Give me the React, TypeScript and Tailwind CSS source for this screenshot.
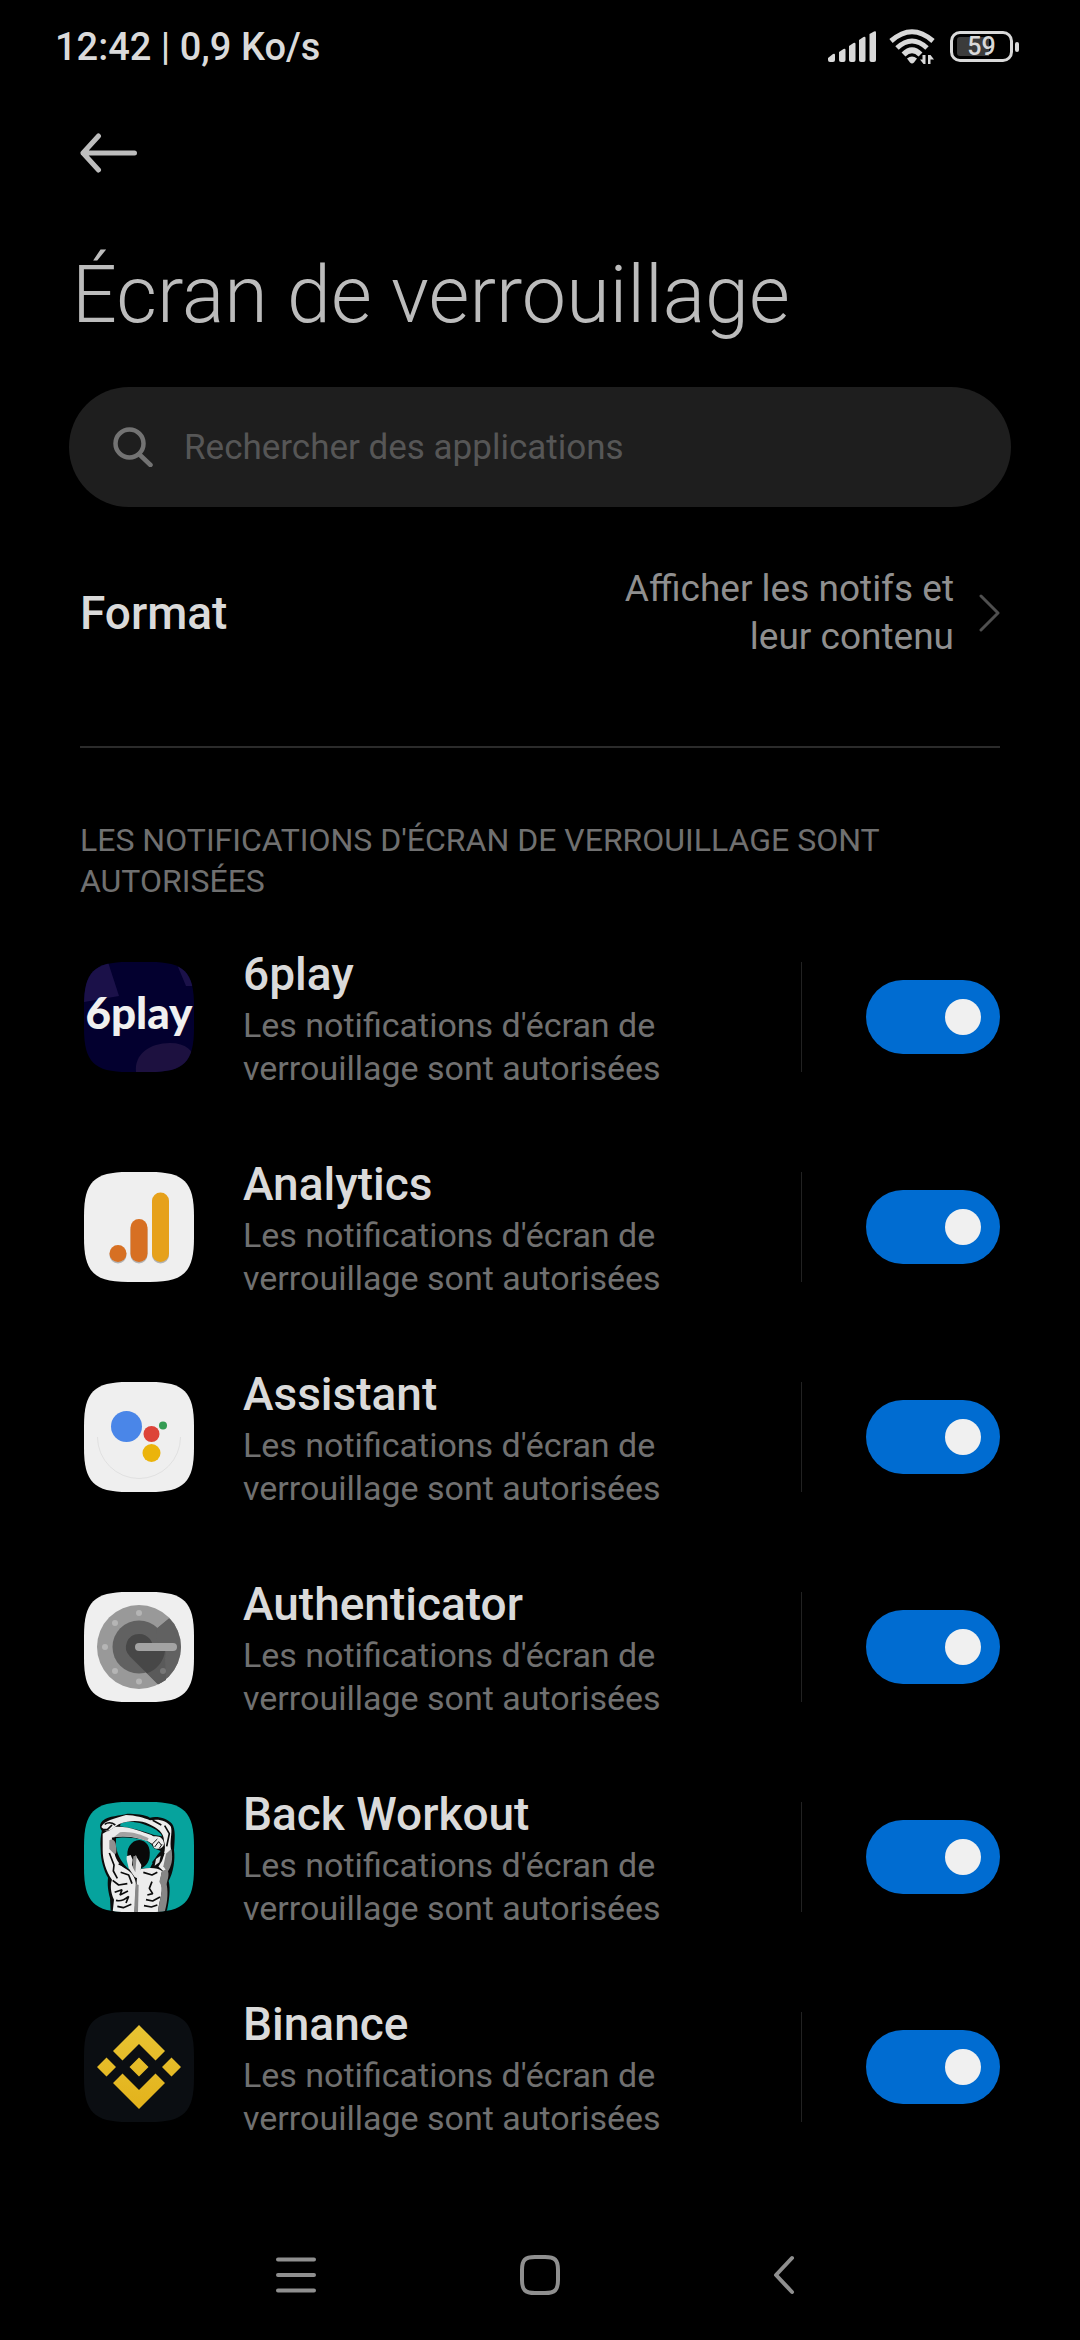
import React, { useState } from "react";

function Tile({ id, fill, children }: { id: string; fill: string; children: React.ReactNode }) {
  return (
    <svg viewBox="0 0 110 110" className="size-[110px] shrink-0" aria-hidden="true">
      <defs>
        <clipPath id={id}>
          <path d="M0 44C0 10 10 0 44 0H66C100 0 110 10 110 44V66C110 100 100 110 66 110H44C10 110 0 100 0 66Z" />
        </clipPath>
      </defs>
      <g clipPath={`url(#${id})`}>
        <rect width="110" height="110" fill={fill} />
        {children}
      </g>
    </svg>
  );
}

const SixPlay = () => (
  <Tile id="t-6play" fill="#03002f">
    <path d="M0 0H24L35 34L0 40Z" fill="#1b1149" />
    <path d="M92 0H110V24H102Z" fill="#1b1149" />
    <path d="M52 110C50 92 66 81 86 81C102 81 110 89 110 98V110Z" fill="#1d1140" />
    <text
      x="55"
      y="67"
      textAnchor="middle"
      fontFamily="Lato, 'Liberation Sans', sans-serif"
      fontWeight="900"
      fontSize="44"
      fill="#f0f0f0"
    >
      6play
    </text>
  </Tile>
);

const Analytics = () => (
  <Tile id="t-analytics" fill="#efefef">
    <g fill="#8a8a8a" opacity="0.6">
      <circle cx="34" cy="83" r="8.5" />
      <rect x="46.500" y="49" width="17" height="42.500" rx="8.500" />
      <rect x="68" y="22" width="17" height="69.500" rx="8.500" />
    </g>
    <circle cx="34" cy="81.5" r="8.5" fill="#d77023" />
    <rect x="46.500" y="47" width="17" height="43" rx="8.500" fill="#d77023" />
    <rect x="68" y="20.500" width="17" height="69.500" rx="8.500" fill="#e6a11b" />
  </Tile>
);

const Assistant = () => (
  <Tile id="t-assistant" fill="#efefef">
    <path d="M13.5 55A41.500 41.500 0 0 0 96.500 55" fill="none" stroke="#e0e0e0" strokeWidth="1" />
    <circle cx="42.500" cy="44.500" r="15.500" fill="#4a86e8" />
    <circle cx="67.500" cy="52" r="8" fill="#dd4439" />
    <circle cx="67.500" cy="71" r="9" fill="#ebb40c" />
    <circle cx="79" cy="43.500" r="4" fill="#349c53" />
  </Tile>
);

const Authenticator = () => (
  <Tile id="t-auth" fill="#efefef">
    <defs>
      <clipPath id="dial">
        <circle cx="55" cy="55" r="42" />
      </clipPath>
    </defs>
    <circle cx="55" cy="55" r="42" fill="#999999" />
    <g clipPath="url(#dial)">
      <path d="M74 35.500L85 26.500L110 20V100L74 92L60 78Z" fill="#616161" />
    </g>
    <circle cx="55" cy="55" r="26.500" fill="#616161" />
    <path d="M73 36.500L85 26.500L92 44L96 55L80 66L72 45Z" fill="#616161" />
    <path d="M45.500 64L74 92.500L82 88L81 66A26.500 26.500 0 0 0 81.500 55H55Z" fill="#5a5a5a" />
    <path d="M55 42A13 13 0 0 0 45.800 64.200L63 81.200A27 27 0 0 0 81 59H68A13 13 0 0 0 55 42Z" fill="#474747" />
    <g fill="#b5b5b5">
      <circle cx="55" cy="21" r="3" />
      <circle cx="31" cy="31" r="3" />
      <circle cx="21" cy="55" r="3" />
      <circle cx="31" cy="79" r="3" />
      <circle cx="55" cy="89.500" r="3" />
    </g>
    <circle cx="79" cy="79" r="3" fill="#777777" />
    <rect x="51" y="51" width="42" height="8" rx="4" fill="#a3a3a3" />
  </Tile>
);

const BackWorkout = () => (
  <Tile id="t-back" fill="#06a39d">
    <svg viewBox="42 51 330 330" width="110" height="110">
      <path
        d="M122 381L120 340C114 316 112 300 114 278C102 258 92 225 92 195C90 170 92 150 96 136C88 130 88 116 98 107C116 92 150 92 172 86C195 86 225 88 240 98C262 92 292 100 306 116C318 132 314 165 312 195C316 225 310 262 296 288C302 312 298 345 290 381Z"
        fill="#0b0b0b"
      />
      <path d="M138 160C160 154 200 160 226 164L244 178L252 190L272 198L262 210C254 224 246 236 240 250L176 252C160 240 142 214 138 184Z" fill="#06a39d" />
      <path d="M152 116C184 102 222 116 258 134C268 142 276 148 276 154L252 150C220 140 186 128 150 124Z" fill="#06a39d" />
      <path d="M134 126C172 122 214 140 244 150L256 158L246 176L232 168C200 156 160 150 124 158L112 140Z" fill="#ececec" />
      <path d="M150 142C180 138 214 148 236 160L232 168C200 156 164 150 132 156Z" fill="#a2a2a2" />
      <path
        d="M94 126C100 108 134 100 168 90C196 91 222 98 240 106C266 100 292 108 302 124C308 140 300 160 302 186C308 216 298 250 288 268C280 258 272 250 264 244C280 218 290 194 282 168C282 142 262 130 238 118C212 104 178 106 150 116C136 122 120 142 104 136Z"
        fill="#ececec"
      />
      <path
        d="M98 146L112 138L124 150C128 160 124 186 134 206C138 226 152 242 168 252C188 262 198 284 198 300L194 381H128L132 344C122 322 120 300 126 284C108 260 98 224 98 196Z"
        fill="#ededed"
      />
      <path
        d="M200 300C200 280 202 258 214 252C240 246 264 248 276 258L270 288C284 314 268 340 264 381H202Z"
        fill="#ededed"
      />
      <path d="M276 258L292 252C300 270 292 284 290 298C296 330 290 360 284 381H264C268 340 284 314 268 290Z" fill="#868686" />
      <path d="M174 224C166 190 184 166 208 165C230 167 242 186 239 212C238 232 226 246 212 250L184 254Z" fill="#090909" />
      <path d="M170 214L182 210L188 224L186 240L194 254L196 210L206 226L214 240L212 256L206 282L194 276L176 250C174 236 168 226 170 214Z" fill="#e6e6e6" />
      <path d="M190 214L200 212L196 262L188 246Z" fill="#8b8b8b" />
      <path d="M197 296L206 300L204 381H192Z" fill="#888888" />
      <path d="M118 166C126 160 138 166 138 184C140 200 140 210 132 206L118 192Z" fill="#8f8f8f" />
      <path d="M240 158C262 148 280 156 282 176C280 190 264 196 252 188L246 172Z" fill="#ececec" />
      <path d="M248 176L262 162M254 186L266 170L274 180M268 190L276 178" fill="none" stroke="#0b0b0b" strokeWidth="3" />
      <path d="M288 206L304 192C310 224 304 244 292 262L280 244Z" fill="#858585" />
      <path d="M246 232L266 206L284 204L276 228L262 250Z" fill="#0b0b0b" />
      <path d="M258 222L272 212L268 232L254 242Z" fill="#dddddd" />
      <path
        d="M94 134L112 134L126 120M104 118C116 110 128 114 136 120M118 204L132 240L130 258L142 280M146 236L166 246M152 262L176 270L186 296M128 286L146 300L172 296M134 322L156 314L150 330L174 318M138 346C152 350 164 344 176 334L168 354M142 364L160 368L184 358M220 262L246 270L262 262M246 290L238 310L248 326L232 330M270 336L248 348L228 344M262 360L244 366L222 362M284 122L298 146L290 184M248 106L274 120"
        fill="none"
        stroke="#0b0b0b"
        strokeWidth="5"
        strokeLinejoin="bevel"
      />
    </svg>
  </Tile>
);

const Binance = () => (
  <Tile id="t-binance" fill="#0b0e12">
    <defs>
      <linearGradient id="gold" x1="0" y1="0" x2="0" y2="1">
        <stop offset="0" stopColor="#e8c433" />
        <stop offset="1" stopColor="#e3b21b" />
      </linearGradient>
    </defs>
    <path
      fill="url(#gold)"
      d="M55 13L81 39L71.500 48.500L55 32L38.500 48.500L29 39ZM22.500 45.500L32 55L22.500 64.500L13 55ZM55 45.500L64.500 55L55 64.500L45.500 55ZM87.500 45.500L97 55L87.500 64.500L78 55ZM38.500 61.500L55 78L71.500 61.500L81 71L55 97L29 71Z"
    />
  </Tile>
);

const apps = [
  { name: "6play", Icon: SixPlay },
  { name: "Analytics", Icon: Analytics },
  { name: "Assistant", Icon: Assistant },
  { name: "Authenticator", Icon: Authenticator },
  { name: "Back Workout", Icon: BackWorkout },
  { name: "Binance", Icon: Binance },
];

function AppRow({ name, Icon }: { name: string; Icon: React.ComponentType }) {
  const [on, setOn] = useState(true);
  const id = `switch-${name.replace(" ", "-")}`;
  return (
    <li className="flex h-[210px] items-center">
      <Icon />
      <label htmlFor={id} className="ml-[49px] min-w-0 flex-1">
        <span className="block text-[46px] leading-[60px] font-medium text-[#dadada]">{name}</span>
        <span className="block max-w-[460px] text-[34px] leading-[43px] text-[#707070]">
          Les notifications d'écran de verrouillage sont autorisées
        </span>
      </label>
      <span className="h-[110px] w-px bg-[#222222]" />
      <input
        id={id}
        type="checkbox"
        role="switch"
        checked={on}
        onChange={(e) => setOn(e.target.checked)}
        className="ml-16 flex h-[74px] w-[134px] shrink-0 cursor-pointer appearance-none items-center rounded-full bg-[#333333] px-[19px] before:size-9 before:rounded-full before:bg-[#f0f0f0] checked:justify-end checked:bg-[#006cd1]"
      />
    </li>
  );
}

function StatusIcons() {
  return (
    <div className="flex items-center gap-[13px] text-[#d9d9d9]">
      <svg viewBox="0 0 48 31" className="h-[31px] w-12" fill="currentColor" aria-label="Réseau mobile">
        <path d="M0 27L5 23Q7 22 7 24V29Q7 31 5 31H2Q0 31 0 29Z" />
        <path d="M11 21L15.500 18Q17.500 17 17.500 19V29Q17.500 31 15.500 31H13Q11 31 11 29Z" />
        <path d="M21 15L25.500 12Q27.500 11 27.500 13V29Q27.500 31 25.500 31H23Q21 31 21 29Z" />
        <path d="M31 9L35.500 6Q37.500 5 37.500 7V29Q37.500 31 35.500 31H33Q31 31 31 29Z" />
        <path d="M41.500 3L46 .5Q48 -.5 48 1.500V29Q48 31 46 31H43.500Q41.500 31 41.500 29Z" />
      </svg>
      <svg viewBox="0 0 46 35" className="h-[35px] w-[46px]" fill="none" stroke="currentColor" aria-label="Wi-Fi">
        <path d="M2 12Q23 -6.500 44 12" strokeWidth="5" />
        <path d="M8 19Q23 5 38 19" strokeWidth="5" />
        <path d="M14.500 25.500Q23 17 31.500 25.500" strokeWidth="5.500" />
        <path d="M18 29.500Q23 25.500 28 29.500L25 33.500Q23 35.500 21 33.500Z" fill="currentColor" stroke="none" />
        <path d="M33.500 26H36.500V35H34.500L31 30.500H33.500ZM39 35H41.500V30.500H45L41.500 26H39Z" fill="currentColor" stroke="none" />
      </svg>
      <div className="ml-0.5 flex items-center gap-0.5">
        <div className="relative flex h-[31px] w-[63px] items-center justify-center rounded-[10px] border-[3px] border-current">
          <span className="absolute inset-y-[3px] left-1 w-8 rounded-l-[3px] bg-[#3b3b3b]" />
          <span className="relative text-[25px] leading-none font-medium">59</span>
        </div>
        <span className="h-2.5 w-1 rounded-sm bg-current" />
      </div>
    </div>
  );
}

export default function App() {
  return (
    <div className="flex min-h-screen flex-col bg-black font-['Roboto',sans-serif] text-[#dadada]">
      <header className="flex h-[92px] items-center justify-between pt-px pr-[61px] pl-[55px]">
        <span className="text-[38px] leading-[46px] font-medium">12:42 | 0,9 Ko/s</span>
        <StatusIcons />
      </header>

      <main className="flex-1">
        <div className="flex h-[122px] items-center px-20">
          <button type="button" aria-label="Retour">
            <svg viewBox="0 0 58 40" className="h-10 w-[58px]" fill="none" stroke="#bdbdbd" strokeWidth="5" strokeLinecap="round" strokeLinejoin="round">
              <path d="M18.500 3L3 20L18.500 37M3 20H54.500" />
            </svg>
          </button>
        </div>

        <h1 className="px-[72px] pt-[33px] text-[79px] leading-[96px] font-light text-[#bcbcbc]">
          Écran de verrouillage
        </h1>

        <label className="mx-[69px] mt-11 flex h-[120px] items-center gap-[31px] rounded-full bg-[#1e1e1e] px-11">
          <svg viewBox="0 0 40 40" className="size-10 shrink-0" fill="none" stroke="#737373" strokeWidth="4.500" strokeLinecap="round" aria-hidden="true">
            <circle cx="16.500" cy="16.500" r="14" />
            <path d="M27 28L37.500 38" />
          </svg>
          <input
            type="text"
            aria-label="Rechercher des applications"
            placeholder="Rechercher des applications"
            className="min-w-0 flex-1 bg-transparent pt-0.5 text-[35px] leading-[48px] text-[#dadada] outline-none placeholder:text-[#565656]"
          />
        </label>

        <button type="button" className="flex h-[210px] w-full items-center px-20 pt-0.5 text-left">
          <span className="flex-1 text-[46px] leading-[58px] font-medium">Format</span>
          <span className="w-[360px] text-right text-[37px] leading-[48px] text-[#8f8f8f]">
            Afficher les notifs et leur contenu
          </span>
          <svg viewBox="0 0 22 40" className="ml-6 h-10 w-[22px]" fill="none" stroke="#4f4f4f" strokeWidth="3" strokeLinecap="round" strokeLinejoin="round" aria-hidden="true">
            <path d="M3 3L20 20L3 37" />
          </svg>
        </button>

        <hr className="mx-20 mt-[29px] border-t-2 border-[#2b2b2b]" />

        <h2 className="px-20 pt-[72px] text-[32px] leading-[41px] text-[#707070]">
          LES NOTIFICATIONS D'ÉCRAN DE VERROUILLAGE SONT AUTORISÉES
        </h2>

        <ul className="mt-2.5 pr-20 pl-[84px]">
          {apps.map((app) => (
            <AppRow key={app.name} {...app} />
          ))}
        </ul>
      </main>

      <nav className="flex h-[130px] items-center justify-center gap-[164px] text-[#8f8f8f]">
        <button type="button" aria-label="Applications récentes" className="flex size-20 items-center justify-center">
          <svg viewBox="0 0 40 36" className="h-9 w-10" stroke="currentColor" strokeWidth="4" strokeLinecap="round">
            <path d="M2 2.500H38M2 18H38M2 33.500H38" />
          </svg>
        </button>
        <button type="button" aria-label="Accueil" className="flex size-20 items-center justify-center">
          <svg viewBox="0 0 40 40" className="size-10" fill="none" stroke="currentColor" strokeWidth="4">
            <path d="M2 15C2 5 5 2 15 2H25C35 2 38 5 38 15V25C38 35 35 38 25 38H15C5 38 2 35 2 25Z" />
          </svg>
        </button>
        <button type="button" aria-label="Retour" className="flex size-20 items-center justify-center">
          <svg viewBox="0 0 22 40" className="h-10 w-[22px]" fill="none" stroke="currentColor" strokeWidth="4" strokeLinecap="round" strokeLinejoin="round">
            <path d="M19 3L3 20L19 37" />
          </svg>
        </button>
      </nav>
    </div>
  );
}
